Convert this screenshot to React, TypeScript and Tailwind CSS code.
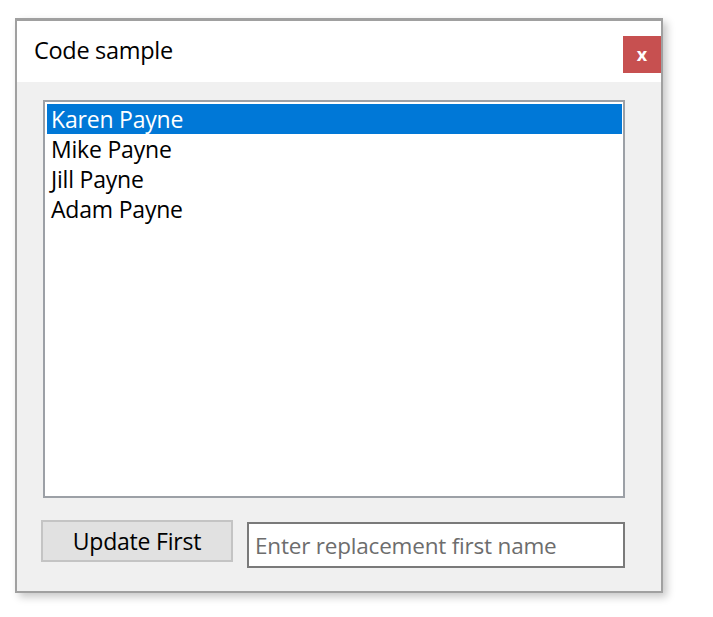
const names = ["Karen Payne", "Mike Payne", "Jill Payne", "Adam Payne"];

export default function App() {
  const selected = 0;

  return (
    <div className="h-[617px] w-full bg-white pl-[15px] pt-[18px] font-['Open_Sans',sans-serif] text-black">
      <div className="flex h-[575px] w-[648px] flex-col border-x-2 border-b-2 border-t-[3px] border-[#a0a0a0] shadow-[4px_4px_8px_rgba(0,0,0,0.22)]">
        <div className="flex h-[61px] items-start justify-between bg-white">
          <h1 className="ml-[17px] mt-[13px] text-[23.5px] leading-[32px] tracking-[-0.3px]">
            Code sample
          </h1>
          <button className="mt-[15px] flex h-[37px] w-[38px] items-center justify-center bg-[#c75050] pb-[2px] text-[18px] font-bold leading-none text-white">
            x
          </button>
        </div>

        <div className="flex flex-1 flex-col bg-[#f0f0f0] pl-[24px] pr-[36px] pt-[18px]">
          <ul className="ml-[2px] h-[398px] border-2 border-[#9ca0a6] bg-white pb-[1px] pl-[2px] pr-[1px] pt-[2px]">
            {names.map((name, i) => (
              <li
                key={name}
                className={
                  i === selected
                    ? "h-[30px] bg-[#0078d7] pl-[4px] text-[23px] leading-[30px] tracking-[-0.2px] text-white"
                    : "h-[30px] pl-[4px] text-[23px] leading-[30px] tracking-[-0.2px]"
                }
              >
                {name}
              </li>
            ))}
          </ul>

          <div className="mt-[22px] flex items-start">
            <button className="h-[42px] w-[192px] border-2 border-[#c4c4c4] bg-[#e1e1e1] text-[23px] leading-[36px] tracking-[-0.2px]">
              Update First
            </button>
            <input
              type="text"
              placeholder="Enter replacement first name"
              className="ml-[14px] mt-[2px] h-[46px] w-[378px] border-2 border-[#7a7a7a] bg-white px-[6px] text-[22.5px] tracking-[-0.2px] outline-none placeholder:text-[#6d6d6d]"
            />
          </div>
        </div>
      </div>
    </div>
  );
}
